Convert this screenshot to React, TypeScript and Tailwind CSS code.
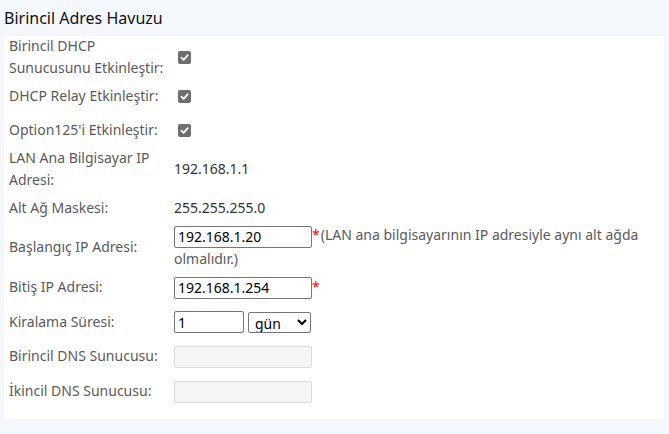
import React from 'react';

const Check = () => (
  <span className="inline-flex items-center justify-center w-[13px] h-[13px] rounded-[2px] bg-[#6e6e6e]">
    <svg width="9" height="9" viewBox="0 0 10 10" fill="none">
      <path d="M1.5 5.2 L4 7.6 L8.6 2.4" stroke="white" strokeWidth="1.9" strokeLinecap="round" strokeLinejoin="round" />
    </svg>
  </span>
);

const TextBox = ({ value, w = 'w-[138px]', disabled = false }: { value?: string; w?: string; disabled?: boolean }) => (
  <input
    type="text"
    defaultValue={value}
    disabled={disabled}
    className={`${w} h-[22px] px-[3px] text-[14px] leading-[20px] rounded-[2px] align-middle outline-none ${
      disabled ? 'bg-[#f5f5f5] border border-[#dcdcdc]' : 'bg-white border border-[#767676] text-black'
    }`}
  />
);

const Row = ({ label, h, children }: { label: React.ReactNode; h: string; children?: React.ReactNode }) => (
  <div className={`flex items-center ${h}`}>
    <div className="w-[170px] shrink-0 pl-[5px] pr-[6px] text-[#5a5a5a] leading-[22px]">{label}</div>
    <div className="flex-1 min-w-0 pr-[6px] text-[#333]">{children}</div>
  </div>
);

export default function App() {
  return (
    <div
      className="w-[669px] h-[434px] bg-[#f4f7fc] text-[14px] leading-[22px]"
      style={{ fontFamily: '"Noto Sans", "Liberation Sans", sans-serif' }}
    >
      <div className="h-[36px] flex items-center pl-[4px] text-[16px] text-[#111]">Birincil Adres Havuzu</div>
      <div className="ml-[4px] w-[660px] bg-white pb-[9px]">
        <Row label="Birincil DHCP Sunucusunu Etkinleştir:" h="h-[42px]">
          <span className="ml-[4px] flex"><Check /></span>
        </Row>
        <Row label="DHCP Relay Etkinleştir:" h="h-[36px]">
          <span className="ml-[4px] flex"><Check /></span>
        </Row>
        <Row label="Option125'i Etkinleştir:" h="h-[32px]">
          <span className="ml-[4px] flex"><Check /></span>
        </Row>
        <Row label="LAN Ana Bilgisayar IP Adresi:" h="h-[46px]">
          192.168.1.1
        </Row>
        <Row label="Alt Ağ Maskesi:" h="h-[32px]">
          255.255.255.0
        </Row>
        <Row label="Başlangıç IP Adresi:" h="h-[46px]">
          <div className="text-[#5a5a5a]">
            <TextBox value="192.168.1.20" />
            <span className="text-[#ff0000] mr-[1px]">*</span>(LAN ana bilgisayarının IP adresiyle aynı alt ağda olmalıdır.)
          </div>
        </Row>
        <Row label="Bitiş IP Adresi:" h="h-[34px]">
          <TextBox value="192.168.1.254" />
          <span className="text-[#ff0000] align-middle">*</span>
        </Row>
        <Row label="Kiralama Süresi:" h="h-[36px]">
          <div className="flex items-center gap-[4px]">
            <TextBox value="1" w="w-[70px]" />
            <select
              defaultValue="gün"
              className="w-[63px] h-[21px] border border-[#767676] rounded-[2px] text-[14px] leading-[19px] text-black bg-white pl-[2px]"
            >
              <option>gün</option>
              <option>saat</option>
              <option>dakika</option>
            </select>
          </div>
        </Row>
        <Row label="Birincil DNS Sunucusu:" h="h-[32px]">
          <TextBox disabled />
        </Row>
        <Row label="İkincil DNS Sunucusu:" h="h-[38px]">
          <TextBox disabled />
        </Row>
      </div>
    </div>
  );
}
